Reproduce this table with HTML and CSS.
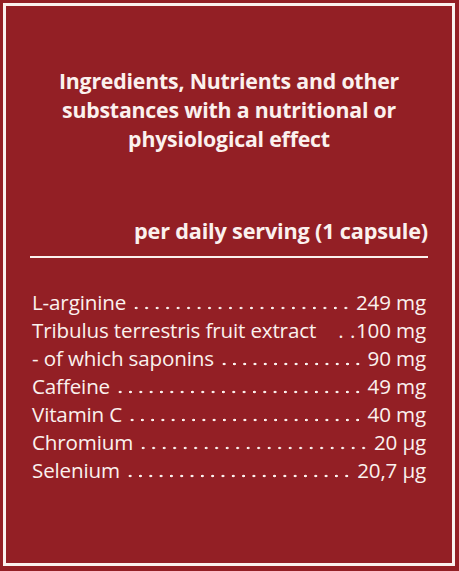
FILE: index.html
```html
<!DOCTYPE html>
<html lang="en">
<head>
<meta charset="utf-8">
<link rel="stylesheet" href="styles.css">
</head>
<body>
<div class="frame">
  <h1 class="title">Ingredients, Nutrients and other substances with a nutritional or physiological effect</h1>
  <div class="serving">per daily serving (1 capsule)</div>
  <div class="rule"></div>
  <ul class="list">
    <li class="row"><span class="name">L-arginine</span><span class="leader"></span><span class="val">249 mg</span></li>
    <li class="row"><span class="name">Tribulus terrestris fruit extract</span><span class="short">. .</span><span class="val">100 mg</span></li>
    <li class="row"><span class="name">- of which saponins</span><span class="leader"></span><span class="val">90 mg</span></li>
    <li class="row"><span class="name">Caffeine</span><span class="leader"></span><span class="val">49 mg</span></li>
    <li class="row"><span class="name">Vitamin C</span><span class="leader"></span><span class="val">40 mg</span></li>
    <li class="row"><span class="name">Chromium</span><span class="leader"></span><span class="val">20 µg</span></li>
    <li class="row"><span class="name">Selenium</span><span class="leader"></span><span class="val">20,7 µg</span></li>
  </ul>
</div>
</body>
</html>
```
FILE: styles.css
```css
html, body {
  margin: 0;
  padding: 0;
  background: #931f25;
}
body {
  width: 459px;
  height: 571px;
  overflow: hidden;
  font-family: "Open Sans", "Liberation Sans", sans-serif;
  color: #fbf1ee;
}
.frame {
  box-sizing: border-box;
  margin: 3px 4px 5px 3px;
  height: 563px;
  border: 3px solid #fbf1ee;
  padding: 0 24px;
}
.title {
  margin: 60px auto 0;
  max-width: 360px;
  font-size: 21.3px;
  font-weight: 700;
  line-height: 29px;
  letter-spacing: -0.2px;
  text-align: center;
}
.serving {
  margin-top: 63px;
  text-align: right;
  font-size: 21.7px;
  font-weight: 700;
  line-height: 29px;
  letter-spacing: -0.2px;
}
.rule {
  height: 2px;
  background: #fbf1ee;
  margin-top: 11px;
}
.list {
  list-style: none;
  margin: 30px 0 0;
  padding: 0 2px;
}
.row {
  display: flex;
  align-items: baseline;
  font-size: 20.6px;
  line-height: 28px;
  letter-spacing: -0.15px;
  white-space: nowrap;
}
.leader {
  flex: 1;
  height: 4px;
  margin: 0 5px 0 5px;
  background-image: radial-gradient(circle, #fbf1ee 1.1px, transparent 1.6px);
  background-size: 10.2px 4px;
  background-position: right center;
  background-repeat: space no-repeat;
}
.short {
  flex: 1;
  text-align: right;
  letter-spacing: 0.5px;
}
```
